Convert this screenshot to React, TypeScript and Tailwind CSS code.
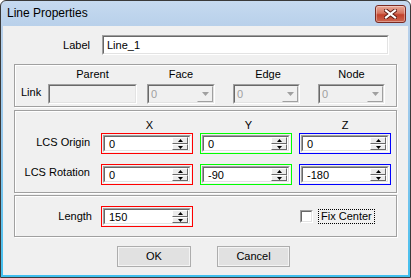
import clsx from "clsx";

const font = "font-['Liberation_Sans',Arial,sans-serif]";

function Sunken({
  className,
  innerClassName,
  children,
}: {
  className?: string;
  innerClassName?: string;
  children?: React.ReactNode;
}) {
  return (
    <div
      className={clsx(
        "border border-t-[#a0a0a0] border-l-[#a0a0a0] border-b-white border-r-white",
        className
      )}
    >
      <div
        className={clsx(
          "h-full border border-t-[#696969] border-l-[#696969] border-b-[#e3e3e3] border-r-[#e3e3e3]",
          innerClassName
        )}
      >
        {children}
      </div>
    </div>
  );
}

function SpinBtn({ up, className }: { up?: boolean; className?: string }) {
  return (
    <div
      className={clsx(
        "flex items-center justify-center bg-[#ececec] border border-t-white border-l-white border-b-[#696969] border-r-[#696969]",
        className
      )}
    >
      <svg width="5" height="3" viewBox="0 0 5 3">
        {up ? (
          <polygon points="2.5,0 5,3 0,3" fill="#000" />
        ) : (
          <polygon points="0,0 5,0 2.5,3" fill="#000" />
        )}
      </svg>
    </div>
  );
}

function Spin({ value, color }: { value: string; color: string }) {
  return (
    <div className={clsx("w-[92px] h-[21px] border p-px", color)}>
      <Sunken className="h-full" innerClassName="flex bg-white">
        <span className="flex-1 pl-[4px] text-[11px] leading-[14px] text-black">
          {value}
        </span>
        <div className="flex flex-col w-[16px] mr-px">
          <SpinBtn up className="h-[7px]" />
          <SpinBtn className="h-[6px]" />
        </div>
      </Sunken>
    </div>
  );
}

function Combo({ width }: { width: string }) {
  return (
    <Sunken className={clsx("h-[20px]", width)} innerClassName="flex bg-[#f0f0f0]">
      <span className="flex-1 pl-[2px] text-[11px] leading-[16px] text-[#a0a0a0]">0</span>
      <div className="w-[16px] flex items-center justify-center border border-t-[#f0f0f0] border-l-[#f0f0f0] border-b-[#a0a0a0] border-r-[#a0a0a0] bg-[#f0f0f0]">
        <svg width="7" height="4" viewBox="0 0 7 4">
          <polygon points="0,0 7,0 3.5,4" fill="#a0a0a0" />
        </svg>
      </div>
    </Sunken>
  );
}

const groupBox =
  "ml-[11px] w-[383px] border border-[#a0a0a0] shadow-[1px_1px_0_#fff,inset_1px_1px_0_#fff]";

export default function App() {
  return (
    <div
      className={clsx(
        "w-[411px] h-[278px] flex flex-col rounded-t-[6px] border border-[#3a3a3a] bg-[linear-gradient(to_bottom,#c6daf0_0px,#b8d0ea_26px,#8fc6ec_150px,#3fbfee_278px)] text-black",
        font
      )}
    >
      {/* title bar */}
      <div className="h-[25px] flex items-start justify-between pl-[6px] pr-[4px]">
        <span className="mt-[5px] text-[12px] leading-[15px] text-black">
          Line Properties
        </span>
        <div className="mt-[4px] w-[31px] h-[18px] rounded-[3px] border border-[#7a2a22] bg-[linear-gradient(to_bottom,#e8a999_0%,#d6735e_45%,#c2402a_55%,#cc6650_100%)] flex items-center justify-center shadow-[inset_0_0_0_1px_rgba(255,255,255,0.35)]">
          <svg width="13" height="10" viewBox="0 0 13 10">
            <path
              d="M2 1.5 L11 8.5 M11 1.5 L2 8.5"
              stroke="#5a1a12"
              strokeWidth="4"
              strokeLinecap="square"
            />
            <path
              d="M2 1.5 L11 8.5 M11 1.5 L2 8.5"
              stroke="#fff"
              strokeWidth="2.2"
              strokeLinecap="square"
            />
          </svg>
        </div>
      </div>

      {/* client */}
      <div className="flex-1 mx-[2px] mb-[2px] bg-[#f0f0f0] pt-[9px] text-[11px]">
        <div className="flex items-center h-[20px]">
          <span className="w-[87px] text-right">Label</span>
          <Sunken className="ml-[12px] w-[287px] h-[20px]" innerClassName="bg-white">
            <span className="pl-[3px] leading-[16px]">Line_1</span>
          </Sunken>
        </div>

        {/* link group */}
        <div className={clsx(groupBox, "mt-[9px] h-[43px] pt-px pl-[6px]")}>
          <div className="flex h-[16px] items-center">
            <span className="w-[27px]" />
            <span className="w-[89px] text-center">Parent</span>
            <span className="ml-[10px] w-[68px] text-center">Face</span>
            <span className="ml-[18px] w-[67px] text-center pl-[3px]">Edge</span>
            <span className="ml-[18px] w-[67px] text-center">Node</span>
          </div>
          <div className="flex mt-[2px] h-[20px] items-center">
            <span className="w-[27px] pb-[4px]">Link</span>
            <Sunken className="w-[89px] h-[20px]" innerClassName="bg-[#f0f0f0]" />
            <div className="ml-[10px]">
              <Combo width="w-[68px]" />
            </div>
            <div className="ml-[18px]">
              <Combo width="w-[67px]" />
            </div>
            <div className="ml-[18px]">
              <Combo width="w-[67px]" />
            </div>
          </div>
        </div>

        {/* LCS group */}
        <div className={clsx(groupBox, "mt-[3px] h-[83px] pt-[6px]")}>
          <div className="flex h-[16px] items-center">
            <span className="w-[86px]" />
            <span className="w-[92px] text-center pl-[5px]">X</span>
            <span className="ml-[7px] w-[92px] text-center pl-[5px]">Y</span>
            <span className="ml-[7px] w-[92px] text-center">Z</span>
          </div>
          <div className="flex items-center h-[21px]">
            <span className="w-[75px] text-right pb-[2px]">LCS Origin</span>
            <div className="ml-[11px] flex gap-[7px]">
              <Spin value="0" color="border-[#ff0000]" />
              <Spin value="0" color="border-[#00ff00]" />
              <Spin value="0" color="border-[#0000ff]" />
            </div>
          </div>
          <div className="flex items-center h-[21px] mt-[10px]">
            <span className="w-[75px] text-right pb-[4px]">LCS Rotation</span>
            <div className="ml-[11px] flex gap-[7px]">
              <Spin value="0" color="border-[#ff0000]" />
              <Spin value="-90" color="border-[#00ff00]" />
              <Spin value="-180" color="border-[#0000ff]" />
            </div>
          </div>
        </div>

        {/* length group */}
        <div className={clsx(groupBox, "mt-[2px] h-[42px] pt-[10px]")}>
          <div className="flex items-center h-[21px]">
            <span className="w-[77px] text-right pb-[1px]">Length</span>
            <div className="ml-[9px]">
              <Spin value="150" color="border-[#ff0000]" />
            </div>
            <Sunken className="ml-[107px] w-[13px] h-[13px]" innerClassName="bg-white" />
            <span className="ml-[5px] h-[15px] px-[2px] border border-dotted border-black leading-[13px]">
              Fix Center
            </span>
          </div>
        </div>

        {/* buttons */}
        <div className="flex mt-[9px] pl-[114px] gap-[26px]">
          <button
            type="button"
            className="w-[74px] h-[21px] border border-[#adadad] bg-[#e1e1e1] shadow-[inset_0_0_0_1px_#f4f4f4] text-[11px]"
          >
            OK
          </button>
          <button
            type="button"
            className="w-[73px] h-[21px] border border-[#adadad] bg-[#e1e1e1] shadow-[inset_0_0_0_1px_#f4f4f4] text-[11px]"
          >
            Cancel
          </button>
        </div>
      </div>
    </div>
  );
}
